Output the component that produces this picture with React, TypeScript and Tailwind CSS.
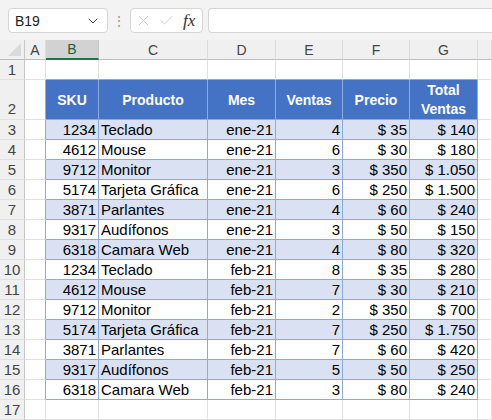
import { ChevronDown, X, Check } from "lucide-react";

type Row = { sku: number; prod: string; mes: string; ventas: number; precio: string; total: string };

const rows: Row[] = [
    { sku: 1234, prod: "Teclado", mes: "ene-21", ventas: 4, precio: "$ 35", total: "$ 140" },
    { sku: 4612, prod: "Mouse", mes: "ene-21", ventas: 6, precio: "$ 30", total: "$ 180" },
    { sku: 9712, prod: "Monitor", mes: "ene-21", ventas: 3, precio: "$ 350", total: "$ 1.050" },
    { sku: 5174, prod: "Tarjeta Gráfica", mes: "ene-21", ventas: 6, precio: "$ 250", total: "$ 1.500" },
    { sku: 3871, prod: "Parlantes", mes: "ene-21", ventas: 4, precio: "$ 60", total: "$ 240" },
    { sku: 9317, prod: "Audífonos", mes: "ene-21", ventas: 3, precio: "$ 50", total: "$ 150" },
    { sku: 6318, prod: "Camara Web", mes: "ene-21", ventas: 4, precio: "$ 80", total: "$ 320" },
    { sku: 1234, prod: "Teclado", mes: "feb-21", ventas: 8, precio: "$ 35", total: "$ 280" },
    { sku: 4612, prod: "Mouse", mes: "feb-21", ventas: 7, precio: "$ 30", total: "$ 210" },
    { sku: 9712, prod: "Monitor", mes: "feb-21", ventas: 2, precio: "$ 350", total: "$ 700" },
    { sku: 5174, prod: "Tarjeta Gráfica", mes: "feb-21", ventas: 7, precio: "$ 250", total: "$ 1.750" },
    { sku: 3871, prod: "Parlantes", mes: "feb-21", ventas: 7, precio: "$ 60", total: "$ 420" },
    { sku: 9317, prod: "Audífonos", mes: "feb-21", ventas: 5, precio: "$ 50", total: "$ 250" },
    { sku: 6318, prod: "Camara Web", mes: "feb-21", ventas: 3, precio: "$ 80", total: "$ 240" },
];

const cols = ["A", "B", "C", "D", "E", "F", "G", ""];

function RowHead({ n, tall }: { n: number; tall?: boolean }) {
    return (
        <div
            className={`flex justify-center bg-[#f0f0f0] border-r border-b border-r-[#c6c6c6] border-b-[#e1e1e1] text-[#444] ${tall ? "items-end pb-[1px]" : "items-center"}`}
        >
            {n}
        </div>
    );
}

function Empty({ blueRight, blueBottom }: { blueRight?: boolean; blueBottom?: boolean }) {
    return (
        <div
            className={`border-r border-b ${blueRight ? "border-r-[#8ea9db]" : "border-r-[#e1e1e1]"} ${blueBottom ? "border-b-[#8ea9db]" : "border-b-[#e1e1e1]"}`}
        />
    );
}

export default function App() {
    return (
        <div
            className="w-[492px] h-[420px] overflow-hidden bg-white text-[15px] leading-[18px] text-black"
            style={{ fontFamily: '"Liberation Sans", Arial, sans-serif' }}
        >
            {/* formula bar */}
            <div className="h-[40px] bg-[#f3f3f3] flex items-start pt-2 pl-2">
                <div className="w-[100px] h-[25px] bg-white border border-[#d6d6d6] rounded-[4px] flex items-center justify-between pl-[6px] pr-[6px] text-[14px] text-[#222]">
                    <span>B19</span>
                    <ChevronDown className="w-4 h-4 text-[#444]" strokeWidth={1.5} />
                </div>
                <div className="w-[22px] h-[25px] flex items-center justify-center text-[#999] text-[14px]">⋮</div>
                <div className="w-[73px] h-[25px] bg-white border border-[#d6d6d6] rounded-[4px] flex items-center pl-[4px] gap-[6px]">
                    <X className="w-[17px] h-[17px] text-[#c4c4c4]" strokeWidth={1.2} />
                    <Check className="w-[17px] h-[17px] text-[#c4c4c4]" strokeWidth={1.2} />
                    <span
                        className="italic text-[17px] text-[#333] ml-[2px]"
                        style={{ fontFamily: '"Liberation Serif", "Times New Roman", serif' }}
                    >
                        fx
                    </span>
                </div>
                <div className="ml-[5px] flex-1 h-[25px] bg-white border border-[#d6d6d6] rounded-l-[4px] border-r-0" />
            </div>

            <div className="grid grid-cols-[25px_21px_53px_109px_68px_67px_67px_68px_1fr] grid-rows-[20px_20px_40px_repeat(15,20px)]">
                {/* column header row */}
                <div className="bg-[#f0f0f0] border-r border-b border-r-[#c6c6c6] border-b-[#bdbdbd] relative">
                    <div className="absolute right-[3px] bottom-[3px] w-0 h-0 border-l-[13px] border-l-transparent border-b-[13px] border-b-[#dadada]" />
                </div>
                {cols.map((c, i) =>
                    c === "B" ? (
                        <div
                            key={i}
                            className="bg-[#d2d2d2] border-r border-r-[#c6c6c6] border-b-2 border-b-[#217346] flex items-center justify-center text-[#1f5e3a] text-[14px]"
                        >
                            {c}
                        </div>
                    ) : (
                        <div
                            key={i}
                            className="bg-[#f0f0f0] border-r border-b border-r-[#dcdcdc] border-b-[#bdbdbd] flex items-center justify-center text-[#444] text-[14px]"
                        >
                            {c}
                        </div>
                    )
                )}

                {/* row 1 */}
                <RowHead n={1} />
                <Empty />
                {[0, 1, 2, 3, 4, 5].map((i) => (
                    <Empty key={i} blueBottom />
                ))}
                <Empty />

                {/* row 2: table header */}
                <RowHead n={2} tall />
                <Empty blueRight />
                {["SKU", "Producto", "Mes", "Ventas", "Precio"].map((h) => (
                    <div
                        key={h}
                        className="bg-[#4472c4] border-r border-b border-[#8ea9db] flex items-center justify-center text-white font-bold text-[14px]"
                    >
                        {h}
                    </div>
                ))}
                <div className="bg-[#4472c4] border-r border-b border-[#8ea9db] flex flex-col items-center justify-center text-white font-bold text-[14px] leading-[19px]">
                    <span>Total</span>
                    <span>Ventas</span>
                </div>
                <Empty />

                {rows.map((r, i) => {
                    const band = i % 2 === 0 ? "bg-[#d9e1f2]" : "bg-white";
                    const cell = `${band} border-r border-b border-[#8ea9db] flex items-center px-[2px] pt-[1px] whitespace-nowrap overflow-hidden`;
                    return (
                        <div key={i} className="contents">
                            <RowHead n={i + 3} />
                            <Empty blueRight />
                            <div className={`${cell} justify-end`}>{r.sku}</div>
                            <div className={`${cell} justify-start`}>{r.prod}</div>
                            <div className={`${cell} justify-end`}>{r.mes}</div>
                            <div className={`${cell} justify-end`}>{r.ventas}</div>
                            <div className={`${cell} justify-end`}>{r.precio}</div>
                            <div className={`${cell} justify-end`}>{r.total}</div>
                            <Empty />
                        </div>
                    );
                })}

                {/* row 17 */}
                <RowHead n={17} />
                {[0, 1, 2, 3, 4, 5, 6, 7].map((i) => (
                    <div key={i} className="border-r border-b border-[#e1e1e1]" />
                ))}
            </div>
        </div>
    );
}
